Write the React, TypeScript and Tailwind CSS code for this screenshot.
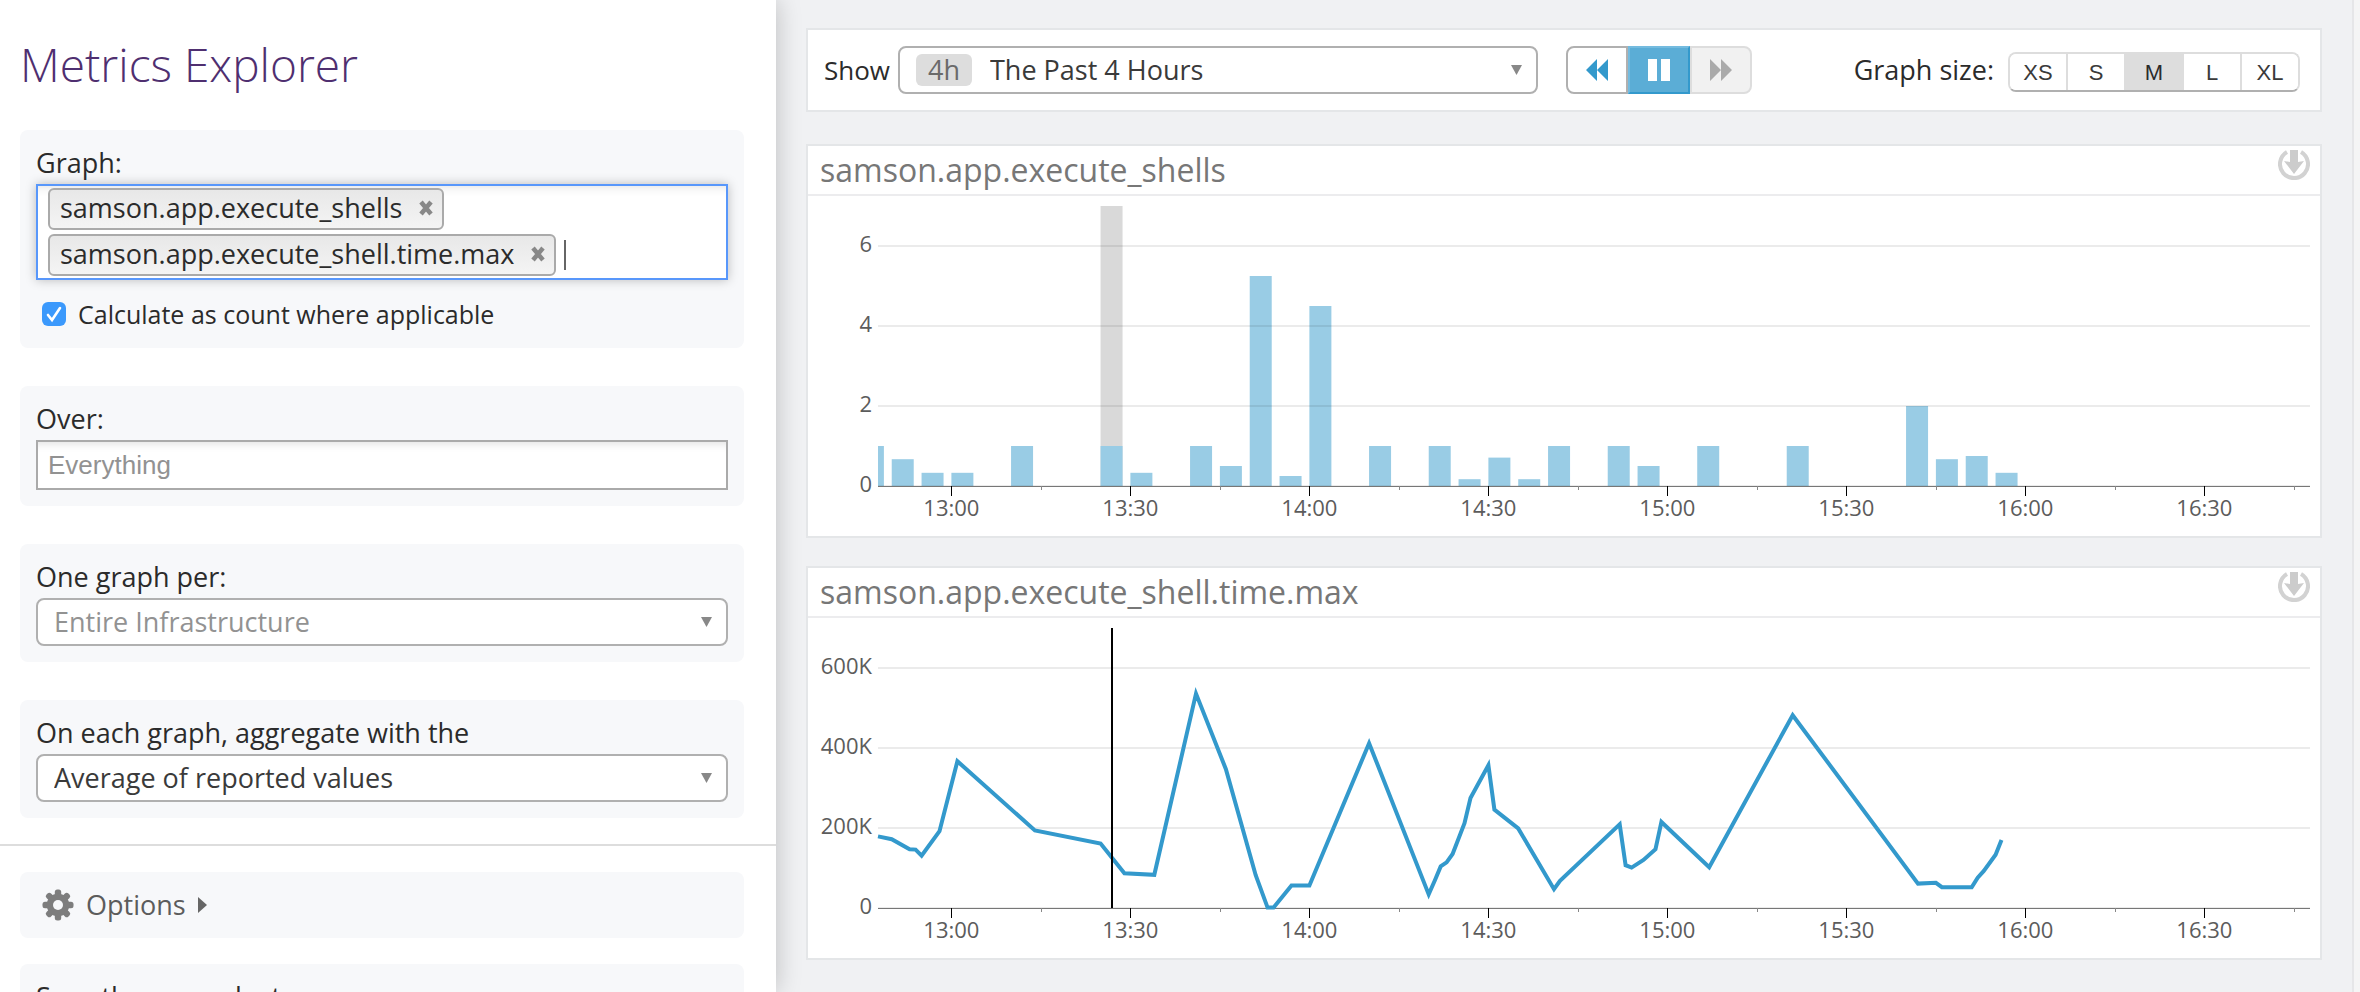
import React from 'react';

const SANS = "font-['Open_Sans','Noto_Sans',sans-serif]";

type Point = [number, number];

const START = -12.3;
const SPAN = 240;
const PLOT = { left: 70, right: 1502, top: 10, bottom: 290 };

const px = (minute: number) =>
  PLOT.left + ((minute - START) / SPAN) * (PLOT.right - PLOT.left);
const py = (value: number, max: number) =>
  PLOT.bottom - (value / max) * (PLOT.bottom - PLOT.top);

const BARS: Point[] = [
  [-15, 1], [-10, 0.67], [-5, 0.33], [0, 0.33], [10, 1], [25, 1], [30, 0.33],
  [40, 1], [45, 0.5], [50, 5.25], [55, 0.25], [60, 4.5], [70, 1], [80, 1],
  [85, 0.17], [90, 0.71], [95, 0.17], [100, 1], [110, 1], [115, 0.5],
  [125, 1], [140, 1], [160, 2], [165, 0.67], [170, 0.75], [175, 0.33],
];

const LINE: Point[] = [
  [-12.3, 179], [-10, 172], [-7, 147], [-6, 146], [-5, 131], [-2, 192],
  [1, 367], [14, 194], [25, 161], [29, 87], [34, 83], [41, 536], [46, 347],
  [51, 82], [53, 1], [54, 1], [57, 56], [60, 56], [70, 412], [80, 34],
  [81, 68], [82, 104], [83, 114], [84, 135], [86, 212], [87, 275], [90, 357],
  [91, 246], [95, 199], [101, 47], [102, 68], [112, 209], [113, 107],
  [114, 101], [116, 120], [118, 147], [119, 215], [127, 102], [141, 482],
  [162, 61], [165, 63], [166, 52], [171, 52], [172, 76], [173, 92],
  [175, 133], [176, 170],
];

const HOURS = ['13:00', '13:30', '14:00', '14:30', '15:00', '15:30', '16:00', '16:30'];

function Axes({ ticks, max }: { ticks: [number, string][]; max: number }) {
  return (
    <g>
      {ticks.map(([v, label]) => (
        <g key={label}>
          <rect x={PLOT.left} y={py(v, max) - 1} width={PLOT.right - PLOT.left} height="2" fill="#000" fillOpacity="0.08" />
          <text x="64" y={py(v, max) + 6} textAnchor="end" fontSize="22" fill="#5c5c5c">
            {label}
          </text>
        </g>
      ))}
      <rect x={PLOT.left} y={PLOT.bottom} width={PLOT.right - PLOT.left} height="1" fill="#777" />
      {HOURS.map((label, i) => (
        <g key={label}>
          <rect x={Math.round(px(i * 30))} y={PLOT.bottom} width="1" height="10" fill="#000" />
          <rect x={Math.round(px(i * 30 + 15))} y={PLOT.bottom} width="1" height="4" fill="#888" />
          <text x={px(i * 30)} y="320" textAnchor="middle" fontSize="22" fill="#5c5c5c">
            {label}
          </text>
        </g>
      ))}
    </g>
  );
}

function BarChart() {
  const barWidth = 22;
  return (
    <svg viewBox="0 0 1512 340" className="block h-auto w-full" role="img" aria-label="samson.app.execute_shells">
      <rect x={px(25)} y={PLOT.top} width={barWidth} height={280} fill="#d9d9d9" />
      {BARS.map(([m, v]) => {
        const left = Math.max(px(m), PLOT.left);
        return (
          <rect key={m} x={left} y={py(v, 7)} width={px(m) + barWidth - left} height={PLOT.bottom - py(v, 7)} fill="#99cce5" />
        );
      })}
      <Axes max={7} ticks={[[6, '6'], [4, '4'], [2, '2'], [0, '0']]} />
    </svg>
  );
}

function LineChart() {
  const points = LINE.map(([m, v]) => `${px(m).toFixed(1)},${py(v, 700).toFixed(1)}`).join(' ');
  return (
    <svg viewBox="0 0 1512 340" className="block h-auto w-full" role="img" aria-label="samson.app.execute_shell.time.max">
      <Axes max={700} ticks={[[600, '600K'], [400, '400K'], [200, '200K'], [0, '0']]} />
      <polyline points={points} fill="none" stroke="#3399cc" strokeWidth="4" />
      <rect x="303" y={PLOT.top} width="2" height="280" fill="#000" />
    </svg>
  );
}

function DownloadIcon() {
  return (
    <svg viewBox="0 0 32 32" className="size-8" aria-hidden="true">
      <path d="M9 4A14 14 0 1 0 23 4" fill="none" stroke="#d2d2d2" strokeWidth="4" />
      <path d="M12 2h8v12l6-1-10 13L6 13l6 1z" fill="#ccc" />
    </svg>
  );
}

function GraphPanel({ title, children }: { title: string; children: React.ReactNode }) {
  return (
    <section className="border-2 border-[#e4e6e8] bg-white">
      <header className="flex h-[50px] items-center justify-between border-b-2 border-[#ececee] pr-2.5 pl-3">
        <h2 className="text-[32px] leading-[48px] text-[#777]">{title}</h2>
        <button type="button" aria-label="Export graph" className="mt-0.5 self-start">
          <DownloadIcon />
        </button>
      </header>
      {children}
    </section>
  );
}

function Caret() {
  return (
    <svg viewBox="0 0 11 10" className="pointer-events-none h-2.5 w-[11px]" aria-hidden="true">
      <path d="M0 0h11L5.5 10z" fill="#888" />
    </svg>
  );
}

function SelectField({ id, label, value, muted }: { id: string; label: string; value: string; muted?: boolean }) {
  return (
    <div className="rounded-lg bg-[#f7f8fa] p-4">
      <label htmlFor={id} className="mb-1 block text-[27px] leading-[34px] text-[#2b2b2b]">{label}</label>
      <div className="grid h-12 items-center rounded-lg border-2 border-[#b0b0b0] bg-white">
        <select
          id={id}
          className={`col-start-1 row-start-1 h-full w-full appearance-none bg-transparent px-4 text-[27px] outline-none ${muted ? 'text-[#929292]' : 'text-[#3a3a3a]'}`}
        >
          <option>{value}</option>
        </select>
        <span className="pointer-events-none col-start-1 row-start-1 mr-3.5 justify-self-end"><Caret /></span>
      </div>
    </div>
  );
}

function Chip({ name }: { name: string }) {
  return (
    <span className="flex h-[42px] items-center gap-4 rounded-md border-2 border-[#aaa] bg-linear-to-b from-[#e8e8e8] to-[#f4f4f4] pr-2 pb-0.5 pl-2.5 text-[27px] text-[#2b2b2b]">
      {name}
      <button type="button" aria-label={`Remove ${name}`}>
        <svg viewBox="0 0 16 16" className="size-4" aria-hidden="true">
          <path d="M3 2l10 12M13 2L3 14" stroke="#888" strokeWidth="4.5" />
        </svg>
      </button>
    </span>
  );
}

function Sidebar() {
  return (
    <aside className="relative z-10 flex w-[776px] shrink-0 flex-col bg-white shadow-[0_0_24px_rgba(0,0,0,0.22)]">
      <h1 className="px-5 pt-8 pb-[34px] text-[46px] leading-16 font-light text-[#4f2f70]">Metrics Explorer</h1>
      <div className="flex flex-col gap-[38px] pr-8 pl-5">
        <div className="rounded-lg bg-[#f7f8fa] p-4">
          <label htmlFor="metric" className="mb-1 block text-[27px] leading-[34px] text-[#2b2b2b]">Graph:</label>
          <div className="flex flex-wrap gap-x-2 gap-y-1 border-2 border-[#5897fb] bg-white px-2.5 py-0.5 shadow-[0_0_10px_rgba(0,0,0,0.25),inset_0_10px_10px_-8px_rgba(0,0,0,0.1)]">
            <div className="flex w-full"><Chip name="samson.app.execute_shells" /></div>
            <Chip name="samson.app.execute_shell.time.max" />
            <div className="flex flex-1 items-center">
              <span className="h-[30px] w-0.5 bg-[#666]" />
              <input id="metric" className="w-full min-w-0 bg-transparent text-[26px] outline-none" />
            </div>
          </div>
          <label className="mt-4 flex items-center gap-3 pl-1.5 text-[25px] leading-9 text-[#2b2b2b]">
            <span className="grid size-6 place-items-center">
              <input type="checkbox" defaultChecked className="col-start-1 row-start-1 size-6 appearance-none rounded-md bg-[#3b99fc]" />
              <svg viewBox="0 0 24 24" className="pointer-events-none col-start-1 row-start-1 size-6" aria-hidden="true">
                <path d="M6 13l4 5 8-12" fill="none" stroke="#fff" strokeWidth="2.6" strokeLinecap="round" />
              </svg>
            </span>
            Calculate as count where applicable
          </label>
        </div>
        <div className="rounded-lg bg-[#f7f8fa] p-4">
          <label htmlFor="over" className="mb-1 block text-[27px] leading-[34px] text-[#2b2b2b]">Over:</label>
          <input
            id="over"
            placeholder="Everything"
            className="block h-[50px] w-full border-2 border-[#aaa] bg-white px-2.5 font-['Liberation_Sans',Arial,sans-serif] text-[26px] shadow-[inset_0_10px_8px_-8px_rgba(0,0,0,0.12)] outline-none placeholder:text-[#929292]"
          />
        </div>
        <SelectField id="per" label="One graph per:" value="Entire Infrastructure" muted />
        <SelectField id="agg" label="On each graph, aggregate with the" value="Average of reported values" />
      </div>
      <div className="mt-[26px] flex flex-col gap-[26px] border-t-2 border-[#ddd] pt-[26px] pr-8 pl-5">
        <button type="button" className="flex h-[66px] items-center rounded-lg bg-[#f7f8fa] px-[22px] text-[27px] text-[#5c5c5c]">
          <svg viewBox="0 0 32 32" className="mr-3 size-8" aria-hidden="true">
            <g fill="#7d7d7d">
              {[0, 45, 90, 135].map((a) => (
                <rect key={a} x="12.8" y="0.5" width="6.4" height="31" rx="2.5" transform={`rotate(${a} 16 16)`} />
              ))}
              <circle cx="16" cy="16" r="11.3" />
            </g>
            <circle cx="16" cy="16" r="5" fill="#f7f8fa" />
          </svg>
          Options
          <svg viewBox="0 0 9 16" className="ml-3 h-4 w-[9px]" aria-hidden="true">
            <path d="M0 0l9 8-9 8z" fill="#666" />
          </svg>
        </button>
        <div className="rounded-lg bg-[#f7f8fa] p-4 text-[27px] leading-[34px] text-[#2b2b2b]">Save these graphs to:</div>
      </div>
    </aside>
  );
}

function Toolbar() {
  return (
    <div className="flex h-[84px] items-center border-2 border-[#e4e6e8] bg-white pr-5 pl-4">
      <label htmlFor="range" className="w-[66px] text-[26px] text-[#2b2b2b]">Show</label>
      <div className="ml-2 grid h-12 w-[640px] items-center rounded-lg border-2 border-[#b0b0b0]">
        <select id="range" className="col-start-1 row-start-1 h-full w-full appearance-none bg-transparent pl-[90px] text-[27px] text-[#3a3a3a] outline-none">
          <option>The Past 4 Hours</option>
        </select>
        <span className="pointer-events-none col-start-1 row-start-1 mr-3.5 ml-4 flex items-center justify-between">
          <span className="w-14 rounded-md bg-[#ddd] text-center text-[27px] leading-8 text-[#6a6a6a]">4h</span>
          <Caret />
        </span>
      </div>
      <div className="ml-7 flex h-12">
        <button type="button" aria-label="Back" className="grid w-[62px] place-items-center rounded-l-lg border-2 border-[#b0b0b0]">
          <svg viewBox="0 0 22 22" className="size-[22px]" aria-hidden="true">
            <path d="M11 0v22L0 11zM22 0v22L11 11z" fill="#3399cc" />
          </svg>
        </button>
        <button type="button" aria-label="Pause" className="grid w-[62px] place-items-center border-2 border-[#3399cc] border-t-[#74bbdf] border-l-[#74bbdf] bg-[#5badd6]">
          <svg viewBox="0 0 22 22" className="size-[22px]" aria-hidden="true">
            <path d="M0 0h9v22H0zM13 0h9v22h-9z" fill="#fff" />
          </svg>
        </button>
        <button type="button" aria-label="Forward" disabled className="grid w-[62px] place-items-center rounded-r-lg border-2 border-[#ddd] bg-[#f1f1f1]">
          <svg viewBox="0 0 22 22" className="size-[22px]" aria-hidden="true">
            <path d="M0 0v22l11-11zM11 0v22l11-11z" fill="#aaa" />
          </svg>
        </button>
      </div>
      <span className="ml-auto text-[27px] text-[#2b2b2b]">Graph size:</span>
      <div className="mt-1 ml-3.5 flex h-10 w-[292px] divide-x-2 divide-[#ddd] overflow-hidden rounded-lg border-2 border-[#ddd] border-b-[#b0b0b0]">
        {['XS', 'S', 'M', 'L', 'XL'].map((s) => (
          <button
            key={s}
            type="button"
            className={`flex-1 font-['Liberation_Sans',Arial,sans-serif] text-[22px] ${s === 'M' ? 'bg-[#ddd] text-[#2b2b2b]' : 'bg-white text-[#3a3a3a]'}`}
          >
            {s}
          </button>
        ))}
      </div>
    </div>
  );
}

export default function App() {
  return (
    <div className={`flex h-screen overflow-hidden bg-[#f0f1f3] ${SANS}`}>
      <Sidebar />
      <main className="flex min-w-0 flex-1 flex-col pt-7 pr-[30px] pl-[30px]">
        <Toolbar />
        <div className="mt-8 flex flex-col gap-7">
          <GraphPanel title="samson.app.execute_shells"><BarChart /></GraphPanel>
          <GraphPanel title="samson.app.execute_shell.time.max"><LineChart /></GraphPanel>
        </div>
      </main>
      <div className="w-2 shrink-0 border-l-2 border-[#e6e6e8] bg-[#f5f5f5]" />
    </div>
  );
}
